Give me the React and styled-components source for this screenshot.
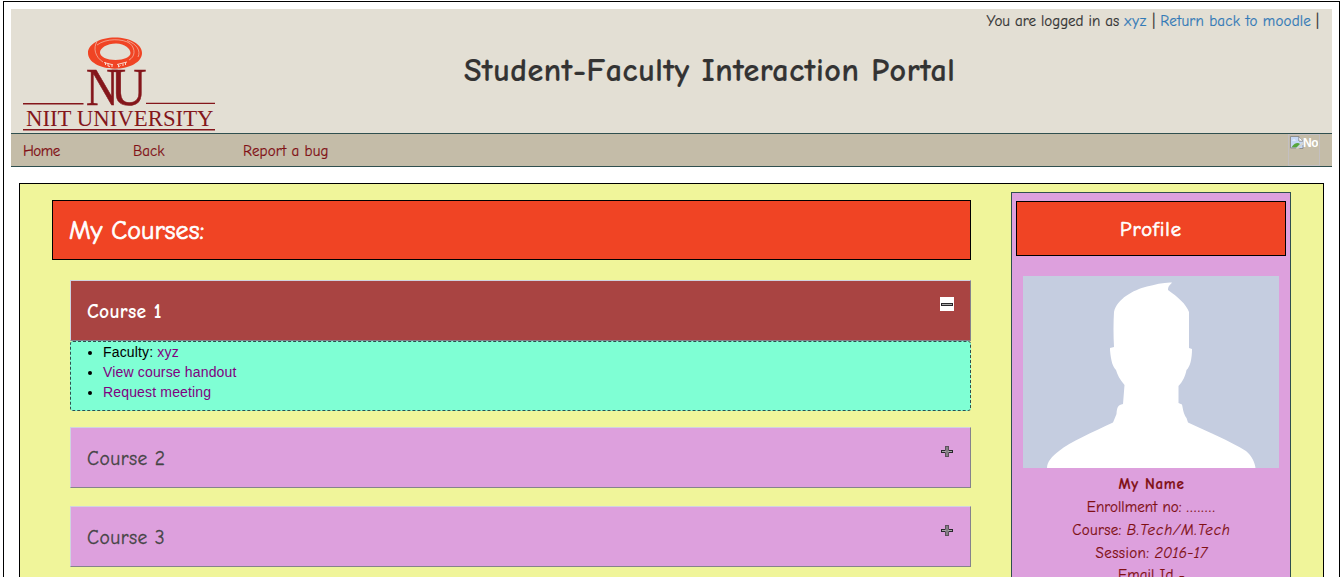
import React from "react";
import styled, { createGlobalStyle, css } from "styled-components";

const GlobalStyle = createGlobalStyle`
  * { box-sizing: border-box; }
  body { margin: 0; background: #fff; color: #333; }
  h1, h2, h3, p, ul { margin: 0; font-weight: normal; }
  a { text-decoration: none; color: inherit; }
`;

const comic = css`
  font-family: "Comic Sans MS", "Comic Neue", "Open Sans", sans-serif;
`;

const Viewport = styled.div`
  height: 100vh;
  overflow: hidden;
  padding: 1px 4px 0 3px;
`;

const Frame = styled.div`
  ${comic}
  height: 900px;
  border: 1px solid #000;
  padding: 7px;
  font-size: 15px;
  line-height: 20px;
  -webkit-text-stroke-width: 0.2px;
`;

const Header = styled.header`
  height: 124px;
  background: #e3dfd4;
  display: grid;
  grid-template-columns: 192px 1fr;
  padding: 0 12px;
`;

const HeaderMain = styled.div`
  display: flex;
  flex-direction: column;
`;

const Session = styled.p`
  display: flex;
  justify-content: flex-end;
  gap: 5px;
  padding: 2px 1px 0 0;
  white-space: pre;
`;

const Spaced = styled.span`
  letter-spacing: ${(p) => p.$track || 0}px;
`;

const BlueLink = styled.a`
  color: #337ab7;
  letter-spacing: ${(p) => p.$track || 0}px;
`;

const Title = styled.h1`
  font-size: 32px;
  line-height: 40px;
  font-weight: 700;
  margin: 20px 0 0 249px;
  white-space: nowrap;
  letter-spacing: 0.58px;
`;

const LogoSvg = styled.svg`
  display: block;
  margin-top: 27px;
  -webkit-text-stroke-width: 0;
`;

const Nav = styled.nav`
  height: 34px;
  background: #c4bca8;
  border-top: 1px solid #2f4f4f;
  border-bottom: 1px solid #2f4f4f;
  display: flex;
  padding: 0 12px;
  color: #800f14;
`;

const NavLink = styled.a`
  width: 110px;
  line-height: 34px;
  white-space: nowrap;
  letter-spacing: ${(p) => p.$track}px;
`;

const BrokenImage = styled.div`
  margin-left: auto;
  width: 32px;
  height: 32px;
  border: 1px solid #c3bfc0;
  padding: 1px;
  display: flex;
  color: #fff;
  font: bold 12px/15px "Liberation Sans", Arial, sans-serif;
  -webkit-text-stroke-width: 0;
  svg { flex: none; }
  span { overflow: hidden; margin-left: -1px; letter-spacing: -0.5px; }
`;

const Content = styled.main`
  margin: 16px 8px 0;
  height: 700px;
  border: 1px solid #000;
  background: #f0f59a;
  display: flex;
  align-items: flex-start;
  padding: 0 32px;
`;

const Courses = styled.section`
  width: 919px;
  padding-top: 16px;
`;

const Banner = styled.h2`
  height: ${(p) => (p.$small ? 55 : 60)}px;
  border: 1px solid #000;
  background: #f04424;
  color: #fff;
  font-size: ${(p) => (p.$small ? 20.5 : 26)}px;
  line-height: ${(p) => (p.$small ? 56 : 60)}px;
  padding: ${(p) => (p.$small ? 0 : "0 16px")};
  text-align: ${(p) => (p.$small ? "center" : "left")};
  letter-spacing: ${(p) => p.$track}px;
  -webkit-text-stroke-width: 0.7px;
`;

const CourseList = styled.div`
  padding: 20px 0 0 18px;
`;

const CourseBar = styled.div`
  height: 61px;
  border: 1px solid;
  border-color: #d0d3e0 #85828c #85828c #d0d3e0;
  background: ${(p) => (p.$open ? "#a94442" : "#dda0dd")};
  color: ${(p) => (p.$open ? "#fff" : "#444")};
  display: flex;
  justify-content: space-between;
  padding: 0 16px;
  margin-bottom: ${(p) => (p.$open ? 0 : 18)}px;
  h3 {
    font-size: 19.5px;
    font-weight: ${(p) => (p.$open ? 700 : 400)};
    line-height: 61px;
    letter-spacing: ${(p) => (p.$open ? 0.3 : 0.5)}px;
    -webkit-text-stroke-width: ${(p) => (p.$open ? 0 : 0.3)}px;
  }
  svg { display: block; margin-top: 16px; }
`;

const Details = styled.ul`
  height: 70px;
  margin-bottom: 16px;
  padding: 0 0 0 32px;
  border: 1px dashed #2f4f4f;
  border-radius: 3px;
  background: #7fffd4;
  color: #000;
  font: 14px/20px "Liberation Sans", Arial, sans-serif;
  letter-spacing: 0.16px;
  -webkit-text-stroke-width: 0;
  a { color: #800080; }
`;

const Profile = styled.aside`
  width: 280px;
  height: 650px;
  margin: 8px 0 0 40px;
  border: 1px solid #2f4f4f;
  background: #dda0dd;
  padding: 8px 4px;
  color: #800f14;
`;

const Photo = styled.svg`
  display: block;
  margin: 20px auto 5px 7px;
`;

const ProfileLine = styled.p`
  line-height: ${(p) => (p.$tight ? 21 : 23)}px;
  padding-left: 1px;
  text-align: center;
  white-space: nowrap;
  font-weight: ${(p) => (p.$bold ? 700 : 400)};
  letter-spacing: ${(p) => p.$track}px;
`;

const Value = styled.span`
  font-style: ${(p) => (p.$plain ? "normal" : "italic")};
  letter-spacing: ${(p) => p.$track}px;
`;

const Logo = () => (
  <LogoSvg width="192" height="96" viewBox="23 36 192 96">
    <g fill="none" stroke="#84161b" strokeWidth="1.4">
      <path d="M23 103.8H83.5M146 103.4H215M23 129.8H215" />
    </g>
    <path
      fillRule="evenodd"
      fill="#f04424"
      d="M115 37.5C130 37.5 142 44 142 53S130 68.7 115 68.7 88 62 88 53 100 37.5 115 37.5ZM116 43.500C107 43.500 100 48 100 52.500S107 60 115.500 60 130.500 57 130.500 53 125 43.500 116 43.500Z"
    />
    <g fill="none" stroke="#f3d9cb" strokeWidth="0.6">
      <path d="M97 41.500C93 48 95 57 103 62" />
      <path d="M97 45C106 38 123 38.500 130 43.500C136 49 135 57 129 60" />
      <path d="M127 40.500C137 44 141 51 138 57" />
    </g>
    <g fill="none" stroke="#fbe8dc" strokeWidth="0.9">
      <path d="M104 62.500L113 64.800M105.500 62.500V65M108 63.500V66L110 66.500M112 64.500V67M117 64.500L127 62M118.500 64.500V67L120.500 65.500M123 63.500V66M125.500 62.500V65" />
    </g>
    <g fill="#84161b" fontFamily="'Liberation Serif', 'Times New Roman', serif">
      <text x="86" y="105" fontSize="52" textLength="32.500" lengthAdjust="spacingAndGlyphs" stroke="#84161b" strokeWidth="0.5">N</text>
      <text x="111" y="105" fontSize="52" textLength="35.500" lengthAdjust="spacingAndGlyphs" stroke="#84161b" strokeWidth="0.5">U</text>
      <text x="26" y="126.300" fontSize="24" textLength="187.500" lengthAdjust="spacingAndGlyphs">NIIT UNIVERSITY</text>
    </g>
  </LogoSvg>
);

const BrokenIcon = () => (
  <svg width="14" height="14" viewBox="0 0 14 14">
    <path d="M1 1H9L13 5V12H1Z" fill="#c5d8f5" />
    <path d="M2 4.500C3 3 5 3 6 4.500Z" fill="#fff" />
    <path d="M1.500 11.500C4 7 8 6 10 8L6.500 11.500Z" fill="#57a63c" />
    <path d="M.5 12V.5H9V5H13M.5 12H6" fill="none" stroke="#909090" />
    <path d="M9 1L13 5H9Z" fill="#fff" stroke="#909090" strokeWidth=".6" />
    <path d="M6 13L13 6V8L9 12" fill="#d8d4c8" />
    <path d="M9.500 12.500H13V9" fill="none" stroke="#909090" />
  </svg>
);

const ToggleIcon = ({ open }) => (
  <svg width="14" height="14" viewBox="0 0 14 14" shapeRendering="crispEdges">
    {open ? (
      <>
        <path fill="#fff" d="M0 0H14V14H0Z" />
        <path fill="#28282c" d="M1 6H13V9H1Z" />
        <path fill="#aaa" d="M2 7H12V8H2Z" />
      </>
    ) : (
      <>
        <path fill="#5d505d" d="M5 2H9V13H5Z" />
        <path fill="#28282c" d="M1 6H13V9H1Z" />
        <path fill="#6f6670" d="M5 6H9V9H5Z" />
        <path fill="#aaa" d="M2 7H12V8H2Z" />
        <path fill="#858085" d="M6 3H8V12H6Z" />
      </>
    )}
  </svg>
);

const Avatar = () => (
  <Photo width="256" height="192" viewBox="0 0 256 192">
    <path fill="#c5cde0" d="M0 0H256V192H0Z" />
    <path
      fill="#fff"
      d="M24 192C24 186 29 180 36 175C47 166 70 156 90 146.500L93.500 138C94 131 95 129 100 128L101.500 109C97 104 94 98 93 94C90 91 88 86 87 74V72L91 71Q90 52 91 36C94 23 110 14 124 10.500C132 8.500 142 6 149 6.500C147 9 145 10 145 14C155 21 163 28 166 36V72L169 73C169 83 167 91 163.500 94C162 101 160 105 155.500 110V127L159 128.500C160 132 160 137 163.500 142L165 146.500C185 156 207 165 223 175C229 180 232 187 232.500 192Z"
    />
  </Photo>
);

const courses = [
  { name: "Course 1", open: true },
  { name: "Course 2" },
  { name: "Course 3" },
];

export default function App() {
  return (
    <Viewport>
      <GlobalStyle />
      <Frame>
        <Header>
          <Logo />
          <HeaderMain>
            <Session>
              <Spaced>You are logged in as</Spaced>
              <BlueLink $track={0.9}>xyz</BlueLink>
              <span>|</span>
              <BlueLink $track={0.2}>Return back to moodle</BlueLink>
              <span>|</span>
            </Session>
            <Title>Student-Faculty Interaction Portal</Title>
          </HeaderMain>
        </Header>
        <Nav>
          <NavLink $track={-0.5}>Home</NavLink>
          <NavLink $track={0}>Back</NavLink>
          <NavLink $track={0.15}>Report a bug</NavLink>
          <BrokenImage>
            <BrokenIcon />
            <span>Not</span>
          </BrokenImage>
        </Nav>
        <Content>
          <Courses>
            <Banner $track={0.05}>My Courses:</Banner>
            <CourseList>
              {courses.map((c) => (
                <React.Fragment key={c.name}>
                  <CourseBar $open={c.open}>
                    <h3>{c.name}</h3>
                    <ToggleIcon open={c.open} />
                  </CourseBar>
                  {c.open && (
                    <Details>
                      <li>Faculty: <a href="#faculty">xyz</a></li>
                      <li><a href="#handout">View course handout</a></li>
                      <li><a href="#meeting">Request meeting</a></li>
                    </Details>
                  )}
                </React.Fragment>
              ))}
            </CourseList>
          </Courses>
          <Profile>
            <Banner $small $track={0.95}>Profile</Banner>
            <Avatar />
            <ProfileLine $bold $track={0.7}>My Name</ProfileLine>
            <ProfileLine $track={0.05}>
              Enrollment no: <Value $plain $track={1.4}>........</Value>
            </ProfileLine>
            <ProfileLine $track={0.3}>
              Course: <Value $track={0.9}>B.Tech/M.Tech</Value>
            </ProfileLine>
            <ProfileLine $track={0.4}>
              Session: <Value $track={0.3}>2016-17</Value>
            </ProfileLine>
            <ProfileLine $tight $track={0.1}>Email Id -</ProfileLine>
          </Profile>
        </Content>
      </Frame>
    </Viewport>
  );
}
